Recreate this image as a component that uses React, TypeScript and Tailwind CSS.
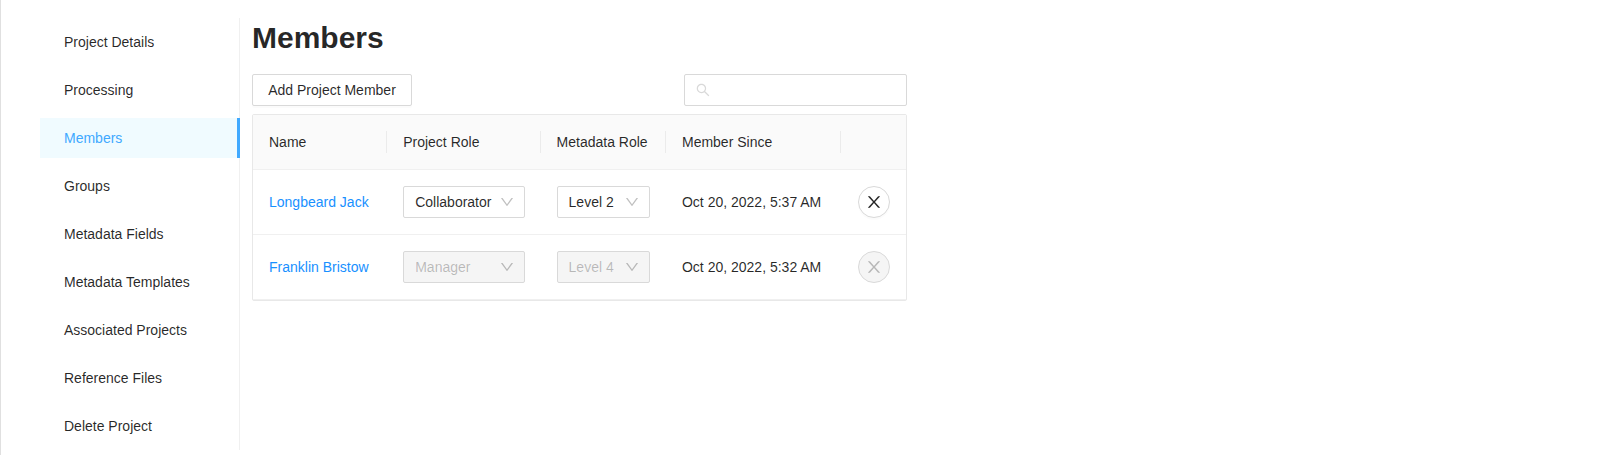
import React from "react";

const menuItems = [
  "Project Details",
  "Processing",
  "Members",
  "Groups",
  "Metadata Fields",
  "Metadata Templates",
  "Associated Projects",
  "Reference Files",
  "Delete Project",
];

const members = [
  { name: "Longbeard Jack", role: "Collaborator", level: "Level 2", since: "Oct 20, 2022, 5:37 AM", disabled: false },
  { name: "Franklin Bristow", role: "Manager", level: "Level 4", since: "Oct 20, 2022, 5:32 AM", disabled: true },
];

const columns = ["Name", "Project Role", "Metadata Role", "Member Since", ""];

const rowGrid = "grid grid-cols-[134.2px_153.4px_125.4px_175px_65px] items-center border-b border-[#f0f0f0]";

type IconProps = { className: string; d: string; viewBox?: string };

function Icon({ className, d, viewBox = "64 64 896 896" }: IconProps) {
  return (
    <svg viewBox={viewBox} preserveAspectRatio="none" fill="currentColor" className={className} aria-hidden="true">
      <path d={d} />
    </svg>
  );
}

const searchPath =
  "M909.6 854.5L649.9 594.8C690.2 542.7 712 479 712 412c0-80.2-31.3-155.4-87.9-212.1-56.6-56.7-132-87.9-212.1-87.9s-155.5 31.3-212.1 87.9C143.2 256.5 112 331.8 112 412c0 80.1 31.3 155.5 87.9 212.1C256.5 680.8 331.8 712 412 712c67 0 130.6-21.8 182.7-62l259.7 259.6a8.2 8.2 0 0 0 11.6 0l43.6-43.5a8.2 8.2 0 0 0 0-11.6zM570.4 570.4C528 612.7 471.8 636 412 636s-116-23.3-158.4-65.6C211.3 528 188 471.8 188 412s23.3-116.1 65.6-158.4C296 211.3 352.2 188 412 188s116.1 23.2 158.4 65.6S636 352.2 636 412s-23.3 116.1-65.6 158.4z";
const downPath =
  "M884 256h-75c-5.1 0-9.9 2.5-12.9 6.6L512 654.2 227.9 262.6c-3-4.1-7.8-6.6-12.9-6.6h-75c-6.5 0-10.3 7.4-6.5 12.7l352.6 486.1c12.8 17.6 39 17.6 51.7 0l352.6-486.1c3.9-5.3.1-12.7-6.4-12.7z";
const closePath =
  "M563.8 512l262.5-312.9c4.4-5.2.7-13.1-6.1-13.1h-79.8c-4.7 0-9.2 2.1-12.3 5.7L511.6 449.8 295.1 191.7c-3-3.6-7.5-5.7-12.3-5.7H203c-6.8 0-10.5 7.9-6.1 13.1L459.4 512 196.9 824.9A7.95 7.95 0 0 0 203 838h79.8c4.7 0 9.2-2.1 12.3-5.7l216.5-258.1 216.5 258.1c3 3.6 7.5 5.7 12.3 5.7h79.8c6.8 0 10.5-7.9 6.1-13.1L563.8 512z";

function Select({ value, disabled }: { value: string; disabled: boolean }) {
  return (
    <button
      type="button"
      disabled={disabled}
      className={`flex h-8 w-full items-center justify-between rounded-xs border border-[#d9d9d9] px-[11px] ${
        disabled ? "bg-[#f5f5f5] text-black/25" : "bg-white text-black/85"
      }`}
    >
      <span>{value}</span>
      <Icon className="-mr-px size-3.5 text-black/25" d={downPath} />
    </button>
  );
}

export default function App() {
  return (
    <div className="flex h-[455px] w-full border-l border-[#e0e0e0] bg-white pt-[18px] pl-[39px] font-['Liberation_Sans',Arial,sans-serif] text-[14px] leading-[22px] text-black/85">
      <nav className="flex h-[432px] w-[200px] shrink-0 flex-col gap-2 border-r border-[#f0f0f0] py-1">
        {menuItems.map((item) => (
          <a
            key={item}
            className={`-mr-px flex h-10 shrink-0 items-center pl-6 ${
              item === "Members" ? "border-r-3 border-[#40a9ff] bg-[#f0fbff] text-[#40a9ff]" : ""
            }`}
          >
            {item}
          </a>
        ))}
      </nav>

      <main className="ml-3 w-[655px]">
        <h1 className="mb-[16px] h-10 text-[30px] leading-[40px] font-bold">Members</h1>
        <div className="flex h-8 justify-between">
          <button
            type="button"
            className="h-8 w-40 rounded-xs border border-[#d9d9d9] bg-white shadow-[0_2px_0_rgba(0,0,0,0.016)]"
          >
            Add Project Member
          </button>
          <label className="flex w-[223px] items-center rounded-xs border border-[#d9d9d9] px-[11px]">
            <Icon className="size-3.5 text-[#d9d9d9]" d={searchPath} />
            <input aria-label="Search" className="ml-1 min-w-0 flex-1 outline-none" />
          </label>
        </div>

        <section className="mt-2 rounded-xs border border-[#e8e8e8]">
          <div className={`${rowGrid} h-[55px] bg-[#fafafa]`}>
            {columns.map((title, i) => (
              <div key={i} className={`h-[22px] pl-4 ${i < 4 ? "border-r border-[#ebebeb]" : ""}`}>
                {title}
              </div>
            ))}
          </div>
          {members.map((m) => (
            <div key={m.name} className={`${rowGrid} h-[65px]`}>
              <a className="pl-4 text-[#1890ff]">{m.name}</a>
              <div className="px-4">
                <Select value={m.role} disabled={m.disabled} />
              </div>
              <div className="px-4">
                <Select value={m.level} disabled={m.disabled} />
              </div>
              <div className="pl-4">{m.since}</div>
              <div className="pl-[17px]">
                <button
                  type="button"
                  aria-label="Remove member"
                  disabled={m.disabled}
                  className={`flex size-8 items-center justify-center rounded-full border border-[#d9d9d9] ${
                    m.disabled
                      ? "bg-[#f5f5f5] text-black/25"
                      : "bg-white text-black/85 shadow-[0_2px_0_rgba(0,0,0,0.016)]"
                  }`}
                >
                  <Icon className="size-4" d={closePath} viewBox="92 64 840 896" />
                </button>
              </div>
            </div>
          ))}
        </section>
      </main>
    </div>
  );
}
